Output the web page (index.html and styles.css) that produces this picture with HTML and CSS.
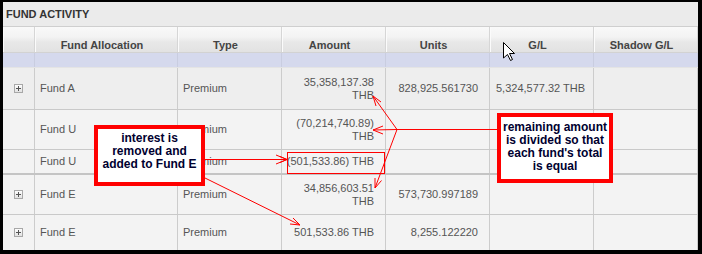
FILE: index.html
```html
<!DOCTYPE html>
<html>
<head>
<meta charset="utf-8">
<link rel="stylesheet" href="styles.css">
</head>
<body>
<div class="panel">
  <div class="title">FUND ACTIVITY</div>
  <div class="row head">
    <div class="c"></div>
    <div class="c">Fund Allocation</div>
    <div class="c">Type</div>
    <div class="c">Amount</div>
    <div class="c">Units</div>
    <div class="c">G/L</div>
    <div class="c">Shadow G/L</div>
  </div>
  <div class="row band">
    <div class="c"></div><div class="c"></div><div class="c"></div><div class="c"></div><div class="c"></div><div class="c"></div><div class="c"></div>
  </div>
  <div class="row h42 dark">
    <div class="c ico"><span class="plus"></span></div>
    <div class="c">Fund A</div>
    <div class="c">Premium</div>
    <div class="c amt"><span>35,358,137.38 THB</span></div>
    <div class="c num">828,925.561730</div>
    <div class="c gl">5,324,577.32 THB</div>
    <div class="c"></div>
  </div>
  <div class="row h40">
    <div class="c ico"></div>
    <div class="c">Fund U</div>
    <div class="c">Premium</div>
    <div class="c amt"><span>(70,214,740.89) THB</span></div>
    <div class="c num"></div>
    <div class="c gl"></div>
    <div class="c"></div>
  </div>
  <div class="row h25 thick">
    <div class="c ico"></div>
    <div class="c">Fund U</div>
    <div class="c">Premium</div>
    <div class="c amt"><span>(501,533.86) THB</span></div>
    <div class="c num"></div>
    <div class="c gl"></div>
    <div class="c"></div>
  </div>
  <div class="row h40">
    <div class="c ico"><span class="plus"></span></div>
    <div class="c">Fund E</div>
    <div class="c">Premium</div>
    <div class="c amt"><span>34,856,603.51 THB</span></div>
    <div class="c num">573,730.997189</div>
    <div class="c gl"></div>
    <div class="c"></div>
  </div>
  <div class="row h35 last">
    <div class="c ico"><span class="plus"></span></div>
    <div class="c">Fund E</div>
    <div class="c">Premium</div>
    <div class="c amt"><span>501,533.86 THB</span></div>
    <div class="c num">8,255.122220</div>
    <div class="c gl"></div>
    <div class="c"></div>
  </div>
</div>

<div class="callout left">interest is<br>removed and<br>added to Fund E</div>
<div class="callout right">remaining amount<br>is divided so that<br>each fund's total<br>is equal</div>

<svg class="overlay" width="702" height="254" viewBox="0 0 702 254">
  <g stroke="#f00" stroke-width="1" fill="none">
    <rect x="287.5" y="152.5" width="97" height="21"/>
    <path d="M205 159.5 H287 M276 155 L287 159.5 L276 164 M280 156.5 L287 159.5 L280 162.5"/>
    <path d="M205 178 L300 225 M293 218 L300 225 L290 224"/>
    <path d="M497 129.5 H397 M397 129.5 L373 96 M376 106 L373 96 L381 102"/>
    <path d="M397 129.5 L373 130 M383 126 L373 130 L383 134"/>
    <path d="M397 129.5 L375 188 M375 178 L375 188 L381.5 180.5"/>
  </g>
  <path d="M503.5 42.5 L503.5 58 L507.5 54.5 L510.5 60.5 L512.5 59.5 L509.5 53.5 L514.5 53.5 Z" fill="#fff" stroke="#000" stroke-width="1" stroke-linejoin="miter"/>
</svg>
</body>
</html>
```

FILE: styles.css
```css
html, body {
  margin: 0;
  padding: 0;
}
body {
  background: #000;
  width: 702px;
  height: 254px;
  padding: 2px 4px 4px 3px;
  box-sizing: border-box;
  position: relative;
  font-family: "Liberation Sans", Arial, sans-serif;
  font-size: 11px;
  overflow: hidden;
}
.panel {
  width: 695px;
  height: 248px;
  background: #f3f3f3;
  overflow: hidden;
}
.title {
  height: 25px;
  box-sizing: border-box;
  background: #ebebeb;
  border-bottom: 1px solid #cfcfcf;
  font-weight: bold;
  color: #333;
  padding-left: 3px;
  display: flex;
  align-items: center;
  padding-bottom: 1px;
}
.row {
  display: grid;
  grid-template-columns: 32px 143px 104px 104px 104px 104px 104px;
  box-sizing: border-box;
  border-bottom: 1px solid #c9c9c9;
  color: #555;
}
.c {
  border-right: 1px solid #cccccc;
  display: flex;
  align-items: center;
  padding-left: 5px;
  line-height: 13px;
  min-width: 0;
}
.head {
  height: 26px;
  background: linear-gradient(#f9f9f9 0%, #f3f3f3 40%, #e8e8e8 60%, #e2e2e2 100%);
  border-bottom: 1px solid #d2d2d2;
}
.head .c {
  justify-content: center;
  padding: 12px 8px 0 0;
  font-weight: bold;
  color: #444;
  border-right: 1px solid #d6d6d6;
  box-shadow: inset 1px 0 0 #fbfbfb;
}
.band {
  height: 15px;
  background: #d5d9ed;
  border-bottom: 1px solid #e4e4e4;
}
.band .c {
  border-right: 1px solid #c9cde0;
}
.h42 { height: 42px; }
.h40 { height: 40px; }
.h25 { height: 25px; }
.h35 { height: 35px; }
.dark { background: #eeeeee; }
.thick { border-bottom: 2px solid #c4c4c4; }
.last { border-bottom: none; }
.ico {
  padding-left: 0;
  justify-content: center;
}
.plus {
  width: 9px;
  height: 9px;
  box-sizing: border-box;
  border: 1px solid #a8a8a8;
  background: linear-gradient(#fdfdfd, #e2e2e2);
  position: relative;
}
.plus::before, .plus::after {
  content: "";
  position: absolute;
  background: #555;
}
.plus::before { left: 1px; top: 3px; width: 5px; height: 1px; }
.plus::after { left: 3px; top: 1px; width: 1px; height: 5px; }
.amt {
  justify-content: flex-end;
  text-align: right;
  padding: 0 11px 0 2px;
}
.num {
  justify-content: flex-end;
  padding: 0 11px 0 0;
}
.gl {
  padding-left: 6px;
}
.callout {
  position: absolute;
  background: #fff;
  border: 4px solid #f00;
  box-sizing: border-box;
  color: #000030;
  font-weight: bold;
  font-size: 12px;
  line-height: 13px;
  text-align: center;
}
.callout.left {
  left: 94px;
  top: 125px;
  width: 111px;
  height: 61px;
  padding-top: 3px;
}
.callout.right {
  left: 497px;
  top: 113px;
  width: 116px;
  height: 70px;
  padding-top: 4px;
}
.overlay {
  position: absolute;
  left: 0;
  top: 0;
  pointer-events: none;
}
```
